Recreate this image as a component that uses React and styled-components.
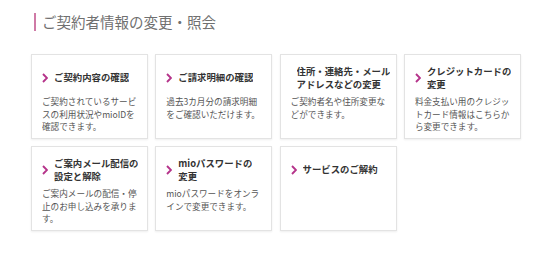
import styled, { createGlobalStyle } from "styled-components";

const GlobalStyle = createGlobalStyle`
  html, body {
    margin: 0;
    padding: 0;
    background: #fff;
  }
  body {
    font-family: "Noto Sans CJK JP", "Noto Sans", sans-serif;
  }
`;

const items = [
  {
    title: ["ご契約内容の確認"],
    text: ["ご契約されているサービ", "スの利用状況やmioIDを", "確認できます。"],
  },
  {
    title: ["ご請求明細の確認"],
    text: ["過去3カ月分の請求明細", "をご確認いただけます。"],
  },
  {
    title: ["住所・連絡先・メール", "アドレスなどの変更"],
    text: ["ご契約者名や住所変更な", "どができます。"],
  },
  {
    title: ["クレジットカードの", "変更"],
    text: ["料金支払い用のクレジッ", "トカード情報はこちらか", "ら変更できます。"],
  },
  {
    title: ["ご案内メール配信の", "設定と解除"],
    text: ["ご案内メールの配信・停", "止のお申し込みを承りま", "す。"],
  },
  {
    title: ["mioパスワードの", "変更"],
    text: ["mioパスワードをオンラ", "インで変更できます。"],
  },
  {
    title: ["サービスのご解約"],
    text: [],
  },
];

function Chevron() {
  return (
    <svg width="6" height="10" viewBox="0 0 6 10">
      <path d="M1 1 L5 5 L1 9" fill="none" stroke="#b5338a" strokeWidth="1.9" />
    </svg>
  );
}

export default function App() {
  return (
    <>
      <GlobalStyle />
      <Page>
        <Heading>ご契約者情報の変更・照会</Heading>
        <Grid>
          {items.map((item, i) => (
            <Card key={i}>
              <CardHead>
                <Chevron />
                <CardTitle>
                  {item.title.map((line, j) => (
                    <Line key={j}>{line}</Line>
                  ))}
                </CardTitle>
              </CardHead>
              {item.text.length > 0 && (
                <CardText>
                  {item.text.map((line, j) => (
                    <Line key={j}>{line}</Line>
                  ))}
                </CardText>
              )}
            </Card>
          ))}
        </Grid>
      </Page>
    </>
  );
}

// ---------------- styled-components ----------------

const Page = styled.div`
  width: 550px;
  height: 254px;
  box-sizing: border-box;
  padding: 13px 0 0 31px;
`;

const Heading = styled.h2`
  margin: 0 0 23px 3px;
  padding-left: 6px;
  border-left: 2px solid #cf7aa6;
  font-size: 14.5px;
  font-weight: normal;
  line-height: 18px;
  height: 18px;
  color: #707070;
  display: flex;
  align-items: center;
`;

const Grid = styled.div`
  display: grid;
  grid-template-columns: repeat(4, 117px);
  grid-auto-rows: 85px;
  column-gap: 7.3px;
  row-gap: 7px;
`;

const Card = styled.div`
  box-sizing: border-box;
  border: 1px solid #e3e3e3;
  box-shadow: 0 1px 2px rgba(0, 0, 0, 0.07);
  background: #fff;
  padding: 10px 6px 0 10px;
  display: flex;
  flex-direction: column;
`;

const CardHead = styled.div`
  display: flex;
  align-items: center;
  gap: 6px;
  min-height: 25px;
  margin-bottom: 5px;
`;

const CardTitle = styled.div`
  display: flex;
  flex-direction: column;
  font-size: 9.4px;
  font-weight: bold;
  line-height: 12.5px;
  color: #333;
  white-space: nowrap;
`;

const CardText = styled.div`
  display: flex;
  flex-direction: column;
  font-size: 8.6px;
  line-height: 12.5px;
  color: #555;
  white-space: nowrap;
`;

const Line = styled.span`
  display: block;
  overflow: hidden;
`;
